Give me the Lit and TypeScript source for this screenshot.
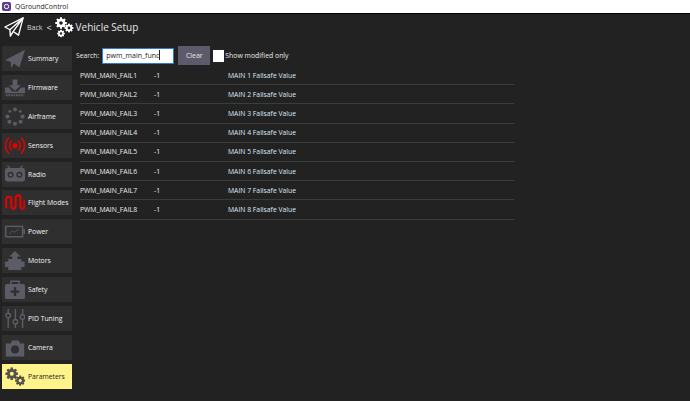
import { LitElement, html, css, svg } from "lit";
import { customElement } from "lit/decorators.js";

const gear = (cx: number, cy: number, r: number, fill: string, hole: string) => {
  const teeth = [0, 45, 90, 135, 180, 225, 270, 315].map(
    (a) => svg`<rect x=${cx - r * 0.24} y=${cy - r * 1.28} width=${r * 0.48} height=${r * 2.56} fill=${fill} transform="rotate(${a} ${cx} ${cy})"></rect>`
  );
  return svg`${teeth}<circle cx=${cx} cy=${cy} r=${r} fill=${fill}></circle><circle cx=${cx} cy=${cy} r=${r * 0.42} fill=${hole}></circle>`;
};

const G = "#5c5c66";
const R = "#e60000";
const B = "#2f2f2f";

const icons: Record<string, unknown> = {
  Summary: svg`<path d="M0 14 L25 1 L18 23 L11 18 L8 24 L7 16 Z" fill=${G}></path>`,
  Firmware: svg`<path d="M9.500 2h6v7h4.500l-7.500 7L5 9h4.500z" fill=${G}></path><path d="M0 12h5l4 5h7l4-5h5v7H0z" fill=${G}></path><path d="M1 21.500h23" stroke=${G} stroke-width="2.500" stroke-dasharray="2.200 1"></path>`,
  Airframe: svg`${[[12.500, 3, 2.500], [19, 5.500, 1.800], [22, 12, 2.600], [19.500, 18.500, 2.600], [12.500, 21, 2.600], [5.500, 18.500, 2.600], [3, 12, 2.600], [6, 5.500, 1.800]].map(([x, y, r]) => svg`<circle cx=${x} cy=${y} r=${r} fill=${G}></circle>`)}`,
  Sensors: svg`<circle cx="12.500" cy="12" r="3.300" fill=${R}></circle><g fill="none" stroke=${R} stroke-width="1.900" stroke-linecap="round"><path d="M8 6.500a8 8 0 0 0 0 11"></path><path d="M17 6.500a8 8 0 0 1 0 11"></path><path d="M4.500 2.500a13.500 13.500 0 0 0 0 19"></path><path d="M20.500 2.500a13.500 13.500 0 0 1 0 19"></path></g>`,
  Radio: svg`<path d="M3 2l4 4M22 2l-4 4" stroke=${G} stroke-width="1.500"></path><rect x="0" y="5" width="25" height="17" rx="3" fill=${G}></rect><circle cx="7" cy="13.500" r="3.800" fill=${B}></circle><circle cx="18" cy="13.500" r="3.800" fill=${B}></circle><circle cx="7" cy="13.500" r="2" fill=${G}></circle><circle cx="18" cy="13.500" r="2" fill=${G}></circle>`,
  "Flight Modes": svg`<path d="M1.500 19V8a3.200 3.200 0 0 1 6.400 0v9a2.700 2.700 0 0 0 5.400 0V6a3 3 0 0 1 6 0v11a2.500 2.500 0 0 0 5 0V8" fill="none" stroke=${R} stroke-width="2.600"></path>`,
  Power: svg`<rect x="1" y="5.500" width="21" height="13" fill="none" stroke=${G} stroke-width="1.800"></rect><rect x="23" y="9" width="2" height="6" fill=${G}></rect><path d="M5 15l4-4 2 2 6-4" fill="none" stroke=${G}></path>`,
  Motors: svg`<path d="M12.500 0l7 7h-4v3h5v3h4v7h-4v4H4v-4H0v-7h4v-3h5V7H5.500z" fill=${G}></path>`,
  Safety: svg`<path d="M7.500 5V1.500h10V5" fill="none" stroke=${G} stroke-width="2"></path><rect x="0" y="5" width="25" height="19" rx="2.500" fill=${G}></rect><path d="M12.500 9v11M7 14.500h11" stroke=${B} stroke-width="3"></path>`,
  "PID Tuning": svg`<g stroke=${G} stroke-width="1.800" fill="none"><path d="M4 0v24M13 0v24M22 0v24"></path></g><g fill=${B} stroke=${G} stroke-width="1.800"><circle cx="4" cy="8" r="2.800"></circle><circle cx="13" cy="16" r="2.800"></circle><circle cx="22" cy="10" r="2.800"></circle></g>`,
  Camera: svg`<path d="M1 7h6l2-4h8l2 4h5v16H1z" fill=${G}></path><circle cx="12.500" cy="14.500" r="5" fill=${B}></circle>`,
  Parameters: svg`${gear(8.500, 8.500, 6, "#55524a", "#fff38c")}${gear(19, 17, 4.800, "#55524a", "#fff38c")}`,
};

const names = ["Summary", "Firmware", "Airframe", "Sensors", "Radio", "Flight Modes", "Power", "Motors", "Safety", "PID Tuning", "Camera", "Parameters"];
const rows = [1, 2, 3, 4, 5, 6, 7, 8];

@customElement("app-root")
export class AppRoot extends LitElement {
  static styles = css`
    :host {
      display: flex;
      flex-direction: column;
      width: 690px;
      height: 401px;
      overflow: hidden;
      background: #222222;
      font-family: "Open Sans", sans-serif;
      color: #ffffff;
    }
    .titlebar {
      height: 13px;
      flex: none;
      background: #ffffff;
      display: flex;
      align-items: center;
      gap: 4px;
      padding-left: 2px;
      color: #222;
      font-size: 6.800px;
      border-bottom: 1px solid #000;
    }
    .titlebar svg { display: block; }
    .header {
      height: 26px;
      padding: 0 0 3px 4px;
      flex: none;
      display: flex;
      align-items: center;
    }
    .back { font-size: 7px; margin-left: 3px; color: #d8d8d8; }
    .lt { font-size: 9px; margin-left: 4px; color: #e8e8e8; }
    .gears { margin-left: 2px; }
    .title { font-size: 10px; margin-left: 2px; color: #e8e8e8; }
    .body { flex: 1; display: flex; min-height: 0; }
    .side {
      width: 72px;
      flex: none;
      padding: 3px 0 0 2px;
      display: flex;
      flex-direction: column;
      gap: 3.900px;
      box-sizing: border-box;
    }
    .nav {
      width: 70px;
      height: 25px;
      flex: none;
      background: #2f2f2f;
      display: flex;
      align-items: center;
      font-size: 6.800px;
      color: #f2f2f2;
      box-sizing: border-box;
      padding-left: 3px;
    }
    .nav svg { flex: none; width: 20px; height: 19.200px; margin-right: 3px; }
    .nav.active { background: #fff38c; color: #1c1c1c; }
    .main { flex: 1; padding: 3px 0 0 4px; min-width: 0; }
    .search {
      height: 19px;
      display: flex;
      align-items: center;
      font-size: 6.800px;
      color: #e8e8e8;
    }
    .input {
      width: 72px;
      height: 16px;
      margin-left: 3px;
      background: #fff;
      border: 1px solid #2f78d6;
      box-sizing: border-box;
      color: #222;
      font-size: 7px;
      line-height: 14px;
      padding-left: 3px;
      white-space: nowrap;
      overflow: hidden;
    }
    .caret { display: inline-block; width: 1px; height: 10px; background: #222; vertical-align: -2px; }
    .clear {
      width: 32px;
      height: 19px;
      margin-left: 4px;
      background: #5d5b6b;
      display: flex;
      align-items: center;
      justify-content: center;
      font-size: 7px;
      color: #e6e6e6;
    }
    .check { width: 11px; height: 12px; margin-left: 3px; background: #fff; flex: none; }
    .show { margin-left: 1px; font-size: 6.900px; }
    .rows { margin-left: 4px; width: 434px; margin-top: 1px; }
    .row {
      height: 18.200px;
      display: flex;
      align-items: center;
      border-bottom: 1px solid #3c3c3c;
      font-size: 6.800px;
      color: #ececec;
    }
    .c1 { width: 74px; flex: none; }
    .c2 { width: 74px; flex: none; }
    .c3 { color: #dde8f5; }
  `;

  render() {
    return html`
      <div class="titlebar">
        <svg width="9" height="9" viewBox="0 0 9 9"><rect width="9" height="9" rx="2" fill="#5b3a8c"></rect><circle cx="4.500" cy="4.500" r="2.200" fill="none" stroke="#fff"></circle></svg>
        <span>QGroundControl</span>
      </div>
      <div class="header">
        <svg width="20" height="20" viewBox="0 0 22 22" fill="none" stroke="#fff" stroke-width="1.500" stroke-linejoin="round"><path d="M1 11 L21 1 L16 20 L10 16 L7 21 L6.500 14 Z"></path><path d="M6.500 14 L21 1 L10 16"></path></svg>
        <span class="back">Back</span><span class="lt">&lt;</span>
        <svg class="gears" width="20" height="22" viewBox="0 0 20 22">${gear(7, 7, 4.300, "#fff", "#222")}${gear(15, 12, 3.300, "#fff", "#222")}${gear(7, 17.500, 2.800, "#fff", "#222")}</svg>
        <span class="title">Vehicle Setup</span>
      </div>
      <div class="body">
        <div class="side">
          ${names.map(
            (n) => html`<div class="nav ${n === "Parameters" ? "active" : ""}"><svg viewBox="0 0 25 24">${icons[n]}</svg><span>${n}</span></div>`
          )}
        </div>
        <div class="main">
          <div class="search">
            <span>Search:</span>
            <div class="input">pwm_main_func<span class="caret"></span></div>
            <div class="clear">Clear</div>
            <div class="check"></div>
            <span class="show">Show modified only</span>
          </div>
          <div class="rows">
            ${rows.map(
              (i) => html`<div class="row"><span class="c1">PWM_MAIN_FAIL${i}</span><span class="c2">-1</span><span class="c3">MAIN ${i} Failsafe Value</span></div>`
            )}
          </div>
        </div>
      </div>
    `;
  }
}
